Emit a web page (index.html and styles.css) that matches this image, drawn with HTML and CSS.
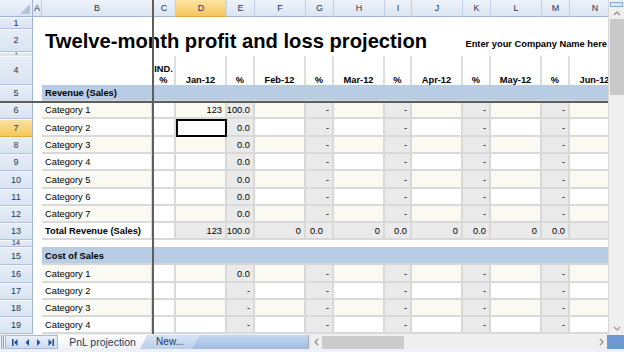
FILE: index.html
```html
<!DOCTYPE html>
<html>
<head>
<meta charset="utf-8">
<title>PnL projection</title>
<link rel="stylesheet" href="styles.css">
</head>
<body>
<div class="app">
  <div class="main">
    <div class="sheet-wrap">
      <div class="sheet">
        <div class="corner"><span class="tri"></span></div>
        <div class="ch">A</div><div class="ch">B</div><div class="ch">C</div><div class="ch sel">D</div><div class="ch">E</div><div class="ch">F</div><div class="ch">G</div><div class="ch">H</div><div class="ch">I</div><div class="ch">J</div><div class="ch">K</div><div class="ch">L</div><div class="ch">M</div><div class="ch">N</div>

        <div class="rh">1</div><div class="blank span14"></div>

        <div class="rh">2</div><div class="blank"></div>
        <div class="titlebar span13"><span class="title">Twelve-month profit and loss projection</span><span class="company">Enter your Company Name here</span></div>

        <div class="rh tiny3">3</div><div class="blank span14"></div>

        <div class="rh">4</div><div class="blank"></div><div class="blank"></div>
        <div class="hd"><span>IND.</span><span>%</span></div><div class="hd">Jan-12</div><div class="hd">%</div><div class="hd">Feb-12</div><div class="hd">%</div><div class="hd">Mar-12</div><div class="hd">%</div><div class="hd">Apr-12</div><div class="hd">%</div><div class="hd">May-12</div><div class="hd">%</div><div class="hd">Jun-12</div>

        <div class="rh">5</div><div class="blank"></div><div class="sec span13">Revenue (Sales)</div>

        <div class="rh">6</div><div class="blank"></div><div class="c cr">Category 1</div><div class="c w"></div><div class="c cr num">123</div><div class="c g num">100.0</div><div class="c cr"></div><div class="c g num">-</div><div class="c cr"></div><div class="c g num">-</div><div class="c cr"></div><div class="c g num">-</div><div class="c cr"></div><div class="c g num">-</div><div class="c cr"></div>

        <div class="rh sel">7</div><div class="blank"></div><div class="c w">Category 2</div><div class="c w"></div><div class="c w active"></div><div class="c g num">0.0</div><div class="c w"></div><div class="c g num">-</div><div class="c w"></div><div class="c g num">-</div><div class="c w"></div><div class="c g num">-</div><div class="c w"></div><div class="c g num">-</div><div class="c w"></div>

        <div class="rh">8</div><div class="blank"></div><div class="c cr">Category 3</div><div class="c w"></div><div class="c cr"></div><div class="c g num">0.0</div><div class="c cr"></div><div class="c g num">-</div><div class="c cr"></div><div class="c g num">-</div><div class="c cr"></div><div class="c g num">-</div><div class="c cr"></div><div class="c g num">-</div><div class="c cr"></div>

        <div class="rh">9</div><div class="blank"></div><div class="c w">Category 4</div><div class="c w"></div><div class="c w"></div><div class="c g num">0.0</div><div class="c w"></div><div class="c g num">-</div><div class="c w"></div><div class="c g num">-</div><div class="c w"></div><div class="c g num">-</div><div class="c w"></div><div class="c g num">-</div><div class="c w"></div>

        <div class="rh">10</div><div class="blank"></div><div class="c cr">Category 5</div><div class="c w"></div><div class="c cr"></div><div class="c g num">0.0</div><div class="c cr"></div><div class="c g num">-</div><div class="c cr"></div><div class="c g num">-</div><div class="c cr"></div><div class="c g num">-</div><div class="c cr"></div><div class="c g num">-</div><div class="c cr"></div>

        <div class="rh">11</div><div class="blank"></div><div class="c w">Category 6</div><div class="c w"></div><div class="c w"></div><div class="c g num">0.0</div><div class="c w"></div><div class="c g num">-</div><div class="c w"></div><div class="c g num">-</div><div class="c w"></div><div class="c g num">-</div><div class="c w"></div><div class="c g num">-</div><div class="c w"></div>

        <div class="rh">12</div><div class="blank"></div><div class="c cr">Category 7</div><div class="c w"></div><div class="c cr"></div><div class="c g num">0.0</div><div class="c cr"></div><div class="c g num">-</div><div class="c cr"></div><div class="c g num">-</div><div class="c cr"></div><div class="c g num">-</div><div class="c cr"></div><div class="c g num">-</div><div class="c cr"></div>

        <div class="rh">13</div><div class="blank"></div><div class="c w b">Total Revenue (Sales)</div><div class="c w"></div><div class="c g num">123</div><div class="c g num">100.0</div><div class="c g num">0</div><div class="c g num off">0.0</div><div class="c g num">0</div><div class="c g num">0.0</div><div class="c g num">0</div><div class="c g num">0.0</div><div class="c g num">0</div><div class="c g num">0.0</div><div class="c g"></div>

        <div class="rh tiny14">14</div><div class="blank span14"></div>

        <div class="rh">15</div><div class="blank"></div><div class="sec span13">Cost of Sales</div>

        <div class="rh">16</div><div class="blank"></div><div class="c cr">Category 1</div><div class="c w"></div><div class="c cr"></div><div class="c g num">0.0</div><div class="c cr"></div><div class="c g num">-</div><div class="c cr"></div><div class="c g num">-</div><div class="c cr"></div><div class="c g num">-</div><div class="c cr"></div><div class="c g num">-</div><div class="c cr"></div>

        <div class="rh">17</div><div class="blank"></div><div class="c w">Category 2</div><div class="c w"></div><div class="c w"></div><div class="c g num">-</div><div class="c w"></div><div class="c g num">-</div><div class="c w"></div><div class="c g num">-</div><div class="c w"></div><div class="c g num">-</div><div class="c w"></div><div class="c g num">-</div><div class="c w"></div>

        <div class="rh">18</div><div class="blank"></div><div class="c cr">Category 3</div><div class="c w"></div><div class="c cr"></div><div class="c g num">-</div><div class="c cr"></div><div class="c g num">-</div><div class="c cr"></div><div class="c g num">-</div><div class="c cr"></div><div class="c g num">-</div><div class="c cr"></div><div class="c g num">-</div><div class="c cr"></div>

        <div class="rh">19</div><div class="blank"></div><div class="c w">Category 4</div><div class="c w"></div><div class="c w"></div><div class="c g num">-</div><div class="c w"></div><div class="c g num">-</div><div class="c w"></div><div class="c g num">-</div><div class="c w"></div><div class="c g num">-</div><div class="c w"></div><div class="c g num">-</div><div class="c w"></div>
      </div>
      <div class="freeze-v"></div>
      <div class="freeze-h"></div>
    </div>
    <div class="vscroll">
      <div class="vsplit"></div>
      <div class="varrow"><svg width="8" height="5" viewBox="0 0 8 5"><polyline points="1,4 4,1 7,4" fill="none" stroke="#8a8a8a" stroke-width="1.2"/></svg></div>
      <div class="vthumb"></div>
      <div class="vtrack"></div>
      <div class="varrow"><svg width="8" height="5" viewBox="0 0 8 5"><polyline points="1,1 4,4 7,1" fill="none" stroke="#9a9a9a" stroke-width="1.2"/></svg></div>
    </div>
  </div>
  <div class="tabbar">
    <div class="grip"></div>
    <div class="nav">
      <svg width="53" height="14" viewBox="0 0 53 14">
        <g fill="#1f4e9c">
          <rect x="7" y="4" width="1.5" height="7"/>
          <polygon points="12.5,4 12.5,11 9,7.5"/>
          <polygon points="24,4 24,11 20.5,7.5"/>
          <polygon points="32,4 32,11 35.5,7.5"/>
          <polygon points="43.5,4 43.5,11 47,7.5"/>
          <rect x="47.5" y="4" width="1.5" height="7"/>
        </g>
      </svg>
    </div>
    <div class="tab tab-active">PnL projection</div>
    <div class="tab tab-new">New...</div>
    <div class="hbar"></div>
    <div class="hsplit"></div>
    <div class="hscroll">
      <div class="harrow"><svg width="5" height="8" viewBox="0 0 5 8"><polyline points="4,1 1,4 4,7" fill="none" stroke="#8a8a8a" stroke-width="1.2"/></svg></div>
      <div class="hthumb"></div>
      <div class="htrack"></div>
      <div class="harrow"><svg width="5" height="8" viewBox="0 0 5 8"><polyline points="1,1 4,4 1,7" fill="none" stroke="#8a8a8a" stroke-width="1.2"/></svg></div>
    </div>
    <div class="bluecorner"></div>
  </div>
</div>
</body>
</html>
```
FILE: styles.css
```css
* { box-sizing: border-box; margin: 0; padding: 0; }
html, body { width: 624px; height: 352px; overflow: hidden; background: #fff; }
body { font-family: "Liberation Sans", Arial, sans-serif; font-size: 9.3px; color: #000; }

.app { display: flex; flex-direction: column; width: 624px; height: 352px; }
.main { display: flex; height: 334px; }

.sheet-wrap { position: relative; width: 608px; height: 334px; overflow: hidden; }
.sheet {
  display: grid;
  width: max-content;
  grid-template-columns: 33px 9px 111px 23px 51px 28px 51px 28px 51px 27px 51px 28px 51px 28px 51px;
  grid-template-rows: 17px 12px 23px 4px 29px 17px 17px 18px 17px 17px 18px 17px 17px 17px 7px 18px 18px 17px 17px 17px;
}

.span14 { grid-column: span 14; }
.span13 { grid-column: span 13; }

.corner {
  background: linear-gradient(#eef3fa, #dbe5f2);
  border-right: 1px solid #9eb6d4;
  border-bottom: 1px solid #9eb6d4;
  display: flex; align-items: flex-end; justify-content: flex-end;
  padding: 0 2px 2px 0;
}
.tri { width: 10px; height: 10px; background: #b3c4db; clip-path: polygon(100% 0, 100% 100%, 0 100%); }

.ch {
  background: linear-gradient(#eef3fa, #dbe5f2);
  border-right: 1px solid #c2d1e5;
  border-bottom: 1px solid #9eb6d4;
  display: flex; align-items: center; justify-content: center;
  color: #1d3557; font-size: 9px;
}
.rh {
  background: linear-gradient(#e6edf7, #dae4f1);
  border-right: 1px solid #9eb6d4;
  border-bottom: 1px solid #aec2dd;
  box-shadow: inset 0 1px 0 #f4f7fc;
  display: flex; align-items: center; justify-content: center;
  color: #1d3557; font-size: 9px; line-height: 1; overflow: hidden;
  padding-top: 1px;
}
.rh.tiny3 { font-size: 4px; padding-top: 0; border-bottom-width: 0; }
.rh.tiny14 { font-size: 7px; line-height: 6px; padding-top: 0; }
.ch.sel, .rh.sel { background: linear-gradient(#fbe3a3, #f5c75c); border-bottom-color: #e3a93f; }

.blank { background: #fff; }

.titlebar {
  display: flex; justify-content: space-between; align-items: flex-end;
  padding: 0 14px 1px 3px; white-space: nowrap;
}
.title { font-size: 20.2px; font-weight: bold; line-height: 20px; }
.company { font-size: 9.3px; font-weight: bold; line-height: 11px; margin-bottom: 1px; }

.hd {
  display: flex; flex-direction: column; align-items: center; justify-content: flex-end;
  border-right: 2px solid #dedede;
  font-weight: bold; line-height: 10.5px; padding-bottom: 0;
  white-space: nowrap; overflow: hidden;
}

.sec {
  background: #b8cce4;
  border-bottom: 2px solid #d6d6d6;
  display: flex; align-items: flex-end;
  padding: 0 3px 1px; font-weight: bold; line-height: 11px;
}

.c {
  border-right: 2px solid #d9d9d9;
  border-bottom: 2px solid #d9d9d9;
  display: flex; align-items: flex-end;
  padding: 0 3px 1px; line-height: 11px;
  white-space: nowrap; overflow: hidden;
}
.cr { background: #faf9f2; }
.w { background: #fff; }
.g { background: #eaeaea; }
.num { justify-content: flex-end; }
.off { padding-right: 9px; }
.b { font-weight: bold; }
.active { outline: 2px solid #000; outline-offset: -2px; }

.freeze-v { position: absolute; left: 152px; top: 0; width: 2px; height: 334px; background: #5e5e5e; }
.freeze-h { position: absolute; left: 0; top: 101px; width: 608px; height: 2px; background: #5e5e5e; }

.vscroll {
  width: 16px; height: 334px; background: #efefef;
  border-left: 1px solid #d6d6d6;
  display: flex; flex-direction: column; align-items: center;
}
.vsplit { width: 13px; height: 5px; margin-top: 2px; border: 1px solid #8ea9d0; background: #dbe6f4; }
.varrow { height: 12px; width: 15px; display: flex; align-items: center; justify-content: center; }
.vthumb { width: 14px; height: 76px; background: #c9c9c9; }
.vtrack { flex: 1; }

.tabbar { height: 18px; display: flex; align-items: flex-start; padding-top: 1px; background: #eef2f8; }
.grip { width: 3px; height: 14px; margin-left: 1px; border-left: 1px solid #8aa6cf; border-right: 1px solid #8aa6cf; background: #e2eaf5; }
.nav {
  width: 53px; height: 14px; margin-left: 1px;
  background: linear-gradient(#e8eff9, #cfdcef);
  border: 1px solid #a4bbdb;
  display: flex;
}
.nav svg { margin: -1px; }
.tab {
  height: 14px; display: flex; align-items: center; justify-content: center;
  font-size: 10.5px; color: #1d3a5e; white-space: nowrap; line-height: 1;
}
.tab-active {
  width: 89px;
  background: linear-gradient(#ffffff, #eef2f7);
  clip-path: polygon(0 0, 100% 0, calc(100% - 7px) 100%, 0 100%);
}
.tab-new {
  width: 60px; margin-left: -7px; z-index: 1; font-size: 10px;
  background: linear-gradient(#d8e4f4, #b9cfec);
  clip-path: polygon(7px 0, 100% 0, calc(100% - 8px) 100%, 0 100%);
}
.hbar { width: 116px; height: 14px; margin-left: -8px; background: linear-gradient(#c6d8f0, #9fbbe2); }
.hsplit { width: 3px; height: 14px; background: #e4e9f0; border-left: 1px solid #a9a9a9; }
.hscroll { width: 296px; height: 14px; background: #efefef; display: flex; align-items: center; }
.harrow { width: 11px; height: 14px; display: flex; align-items: center; justify-content: center; }
.hthumb { width: 82px; height: 13px; background: #cbcbcb; }
.htrack { flex: 1; }
.bluecorner { width: 17px; height: 14px; background: #6f97d1; }
```
